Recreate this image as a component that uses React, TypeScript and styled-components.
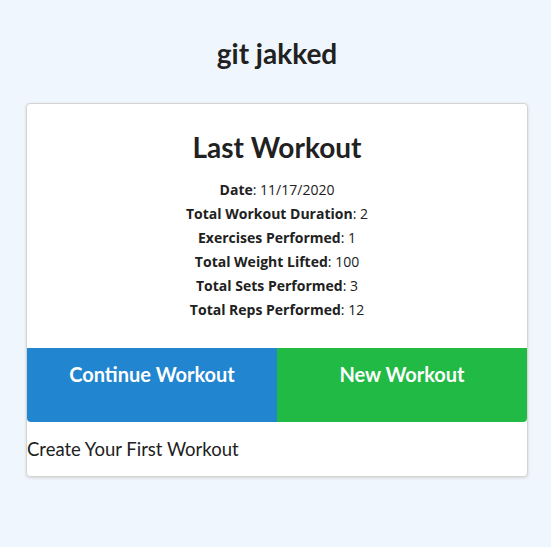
import React from "react";
import styled, { createGlobalStyle } from "styled-components";

const Global = createGlobalStyle`
  html, body { margin: 0; padding: 0; background: #f0f6fe; }
  body { font-family: Lato, "Noto Sans", sans-serif; color: rgba(0,0,0,0.87); }
  * { box-sizing: border-box; }
`;

const Page = styled.div`
  min-height: 547px;
  padding: 36px 23px 0 26px;
  display: flex;
  flex-direction: column;
`;

const Title = styled.h1`
  margin: 0 0 33px;
  font-family: Lato, sans-serif;
  font-weight: 700;
  font-size: 28px;
  line-height: 34px;
  text-align: center;
  color: #212121;
`;

const Card = styled.div`
  width: 100%;
  background: #fff;
  border: 1px solid #d4d4d5;
  border-radius: 4px;
  box-shadow: 0 1px 3px 0 #d4d4d5;
  display: flex;
  flex-direction: column;
`;

const Content = styled.div`
  padding: 25px 16px 26px;
  display: flex;
  flex-direction: column;
  align-items: center;
`;

const Heading = styled.h2`
  margin: 0 0 13px;
  font-family: Lato, sans-serif;
  font-weight: 700;
  font-size: 28px;
  line-height: 36px;
  color: #212121;
`;

const Stat = styled.p`
  margin: 0;
  font-family: "Open Sans", "Noto Sans", sans-serif;
  font-size: 14px;
  line-height: 24px;
  color: #212121;
  b { font-weight: 700; }
`;

const Buttons = styled.div`
  display: flex;
`;

const Btn = styled.button<{ $bg: string; $side: "left" | "right" }>`
  flex: 1;
  height: 74px;
  border: none;
  margin: 0;
  padding: 13px 0 0;
  display: flex;
  justify-content: center;
  align-items: flex-start;
  background: ${(p) => p.$bg};
  color: #fff;
  font-family: Lato, sans-serif;
  font-weight: 700;
  font-size: 20px;
  line-height: 26px;
  border-radius: ${(p) => (p.$side === "left" ? "0 0 0 4px" : "0 0 4px 0")};
  cursor: pointer;
`;

const Footer = styled.div`
  padding: 15px 0 15px;
  font-family: Lato, sans-serif;
  font-size: 18.5px;
  line-height: 24px;
  color: #212121;
`;

const stats: [string, string][] = [
  ["Date", "11/17/2020"],
  ["Total Workout Duration", "2"],
  ["Exercises Performed", "1"],
  ["Total Weight Lifted", "100"],
  ["Total Sets Performed", "3"],
  ["Total Reps Performed", "12"],
];

export default function App() {
  return (
    <>
      <Global />
      <Page>
        <Title>git jakked</Title>
        <Card>
          <Content>
            <Heading>Last Workout</Heading>
            {stats.map(([k, v]) => (
              <Stat key={k}>
                <b>{k}</b>: {v}
              </Stat>
            ))}
          </Content>
          <Buttons>
            <Btn $bg="#2185d0" $side="left">Continue Workout</Btn>
            <Btn $bg="#21ba45" $side="right">New Workout</Btn>
          </Buttons>
          <Footer>Create Your First Workout</Footer>
        </Card>
      </Page>
    </>
  );
}
